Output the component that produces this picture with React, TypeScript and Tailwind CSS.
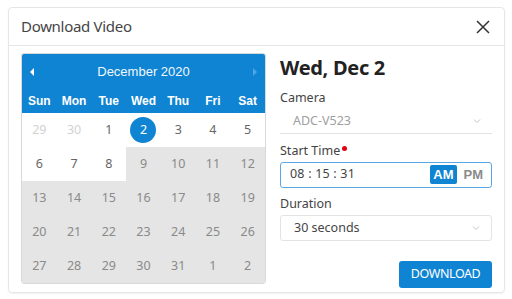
import React from "react";

const weekdays = ["Sun", "Mon", "Tue", "Wed", "Thu", "Fri", "Sat"];

const days: { n: number; muted?: boolean; off?: boolean; sel?: boolean }[] = [
  { n: 29, muted: true },
  { n: 30, muted: true },
  { n: 1 },
  { n: 2, sel: true },
  { n: 3 },
  { n: 4 },
  { n: 5 },
  { n: 6 },
  { n: 7 },
  { n: 8 },
  ...Array.from({ length: 23 }, (_, i) => ({ n: i + 9, off: true })),
  { n: 1, off: true },
  { n: 2, off: true },
];

const Chevron = () => (
  <svg width="10" height="10" viewBox="0 0 10 10" className="text-[#c4c4c4]">
    <path d="M2 3.5 L5 6.5 L8 3.5" fill="none" stroke="currentColor" strokeWidth="1" />
  </svg>
);

const App = () => {
  return (
    <div className="h-[299px] w-[512px] bg-white pl-2 pt-[7px] font-['Noto_Sans',sans-serif]">
      <div className="flex h-[286px] w-[497px] flex-col rounded-[4px] border border-[#e6e6e6] shadow-[0_1px_2px_rgba(0,0,0,0.06)]">
        <div className="flex h-[38px] items-center justify-between border-b border-[#e6e6e6] pl-3 pr-[14px]">
          <h1 className="text-[15px] tracking-[-0.3px] text-[#454545]">Download Video</h1>
          <svg width="14" height="14" viewBox="0 0 14 14">
            <path d="M1 1 L13 13 M13 1 L1 13" stroke="#333" strokeWidth="1.5" />
          </svg>
        </div>
        <div className="flex items-start gap-[14px] pl-3 pt-[7px]">
          <div className="w-[245px] overflow-hidden rounded-[3px] border border-[#d8d8d8] font-['Liberation_Sans',sans-serif]">
            <div className="bg-[#0f84d3] text-white">
              <div className="flex h-[36px] items-center justify-between px-[7px]">
                <svg width="6" height="8" viewBox="0 0 6 8">
                  <path d="M5 0 L1 4 L5 8 Z" fill="#fff" />
                </svg>
                <span className="text-[13px] text-[#f2f8fd]">December 2020</span>
                <svg width="6" height="8" viewBox="0 0 6 8">
                  <path d="M1 0 L5 4 L1 8 Z" fill="#4ea6e3" />
                </svg>
              </div>
              <div className="grid h-[23px] grid-cols-7 items-center pb-[2px] text-center text-[12px] font-bold">
                {weekdays.map((d) => (
                  <span key={d}>{d}</span>
                ))}
              </div>
            </div>
            <div className="grid grid-cols-7 font-['Noto_Sans',sans-serif] text-[12.5px]">
              {days.map((d, i) => (
                <div
                  key={i}
                  className={`flex h-[34px] items-center justify-center ${d.off ? "bg-[#e5e5e5] text-[#8a8a8a]" : "bg-white text-[#666]"} ${d.muted ? "text-[#d2d2d2]" : ""}`}
                >
                  {d.sel ? (
                    <span className="flex h-[26px] w-[26px] items-center justify-center rounded-full bg-[#0f84d3] text-white">
                      {d.n}
                    </span>
                  ) : (
                    d.n
                  )}
                </div>
              ))}
            </div>
          </div>
          <div className="flex w-[212px] flex-col">
            <h2 className="mt-[1px] text-[20px] font-bold leading-[28px] tracking-[-0.3px] text-[#222]">Wed, Dec 2</h2>
            <label className="mt-[7px] text-[12.5px] text-[#444]">Camera</label>
            <div className="mt-[2px] flex h-[24px] items-center justify-between border-b border-[#e3e3e3] pl-[13px] pr-[10px] text-[12.5px] text-[#a0a0a0]">
              <span>ADC-V523</span>
              <Chevron />
            </div>
            <label className="mt-[8px] flex items-start gap-[2px] text-[12.5px] text-[#444]">
              Start Time
              <span className="mt-[4px] h-[5px] w-[5px] rounded-full bg-[#e3000f]" />
            </label>
            <div className="mt-[1px] flex h-[26px] items-center justify-between rounded-[3px] border border-[#5aa7e3] pl-[9px] pr-[8px] text-[12.5px] text-[#444]">
              <span className="tracking-[0.2px]">08 : 15 : 31</span>
              <div className="flex items-center gap-[7px] font-['Liberation_Sans',sans-serif] text-[13px] font-bold">
                <span className="rounded-[2px] bg-[#0f84d3] px-[3px] leading-[19px] text-white">AM</span>
                <span className="text-[#8a8a8a]">PM</span>
              </div>
            </div>
            <label className="mt-[7px] text-[12.5px] text-[#444]">Duration</label>
            <div className="mt-[2px] flex h-[26px] items-center justify-between rounded-[3px] border border-[#e3e3e3] pl-[13px] pr-[10px] text-[12.5px] text-[#444]">
              <span>30 seconds</span>
              <Chevron />
            </div>
            <div className="mt-[20px] flex justify-end">
              <button className="h-[27px] w-[93px] rounded-[3px] bg-[#0f84d3] text-[12.5px] tracking-[-0.4px] text-white">
                DOWNLOAD
              </button>
            </div>
          </div>
        </div>
      </div>
    </div>
  );
};

export default App;
